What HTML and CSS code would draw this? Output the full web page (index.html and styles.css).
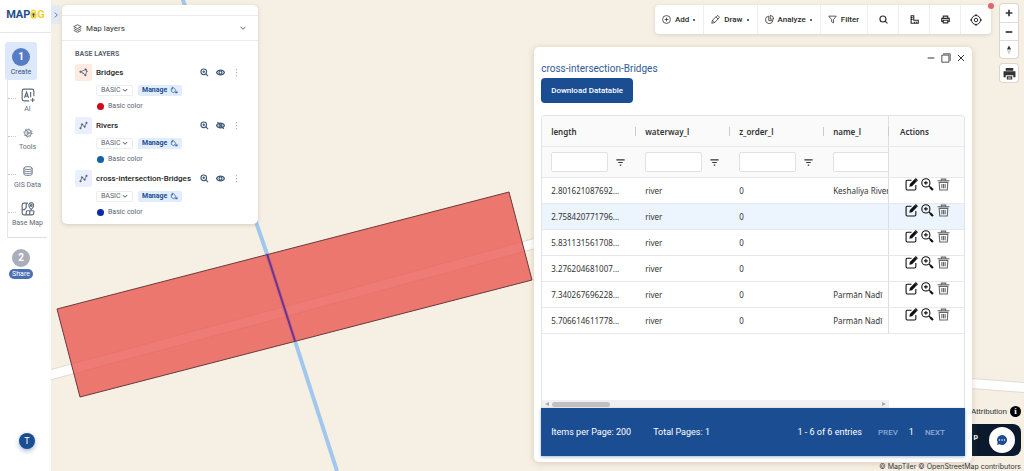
FILE: index.html
```
<!DOCTYPE html>
<html lang="en">
<head>
    <meta charset="UTF-8">
    <meta name="viewport" content="width=device-width, initial-scale=1.0">
    <title>MAPOG</title>
    <link rel="stylesheet" href="styles.css">
</head>
<body>
    <!-- icon sprite -->
    <svg class="sprite" aria-hidden="true">
        <symbol id="i-zoom" viewBox="0 0 24 24"><circle cx="10" cy="10" r="7.5"/><path d="M10 6.5v7M6.5 10h7M15.5 15.5l6 6"/></symbol>
        <symbol id="i-zoom-heavy" viewBox="0 0 24 24"><circle cx="9" cy="9" r="7.5"/><path d="M9 5.5v7M5.5 9h7M14.5 14.5l2 2"/><path d="M16.5 16.5l5.5 5.5" stroke-width="4"/></symbol>
        <symbol id="i-eye" viewBox="0 0 24 24"><path d="M1.5 12C5 3.500 19 3.500 22.500 12C19 20.500 5 20.500 1.500 12z"/><circle cx="12" cy="12" r="4"/></symbol>
        <symbol id="i-eye-off" viewBox="0 0 24 24"><path d="M1.500 12C5 3.500 19 3.500 22.500 12C19 20.500 5 20.500 1.500 12z"/><circle cx="12" cy="12" r="4"/><path d="M4 3l17 18"/></symbol>
        <symbol id="i-dots" viewBox="0 0 24 24"><path d="M12 3v3M12 11v3M12 19v3"/></symbol>
        <symbol id="i-down" viewBox="0 0 24 24"><path d="M2 7l10 10L22 7"/></symbol>
        <symbol id="i-line" viewBox="0 0 24 24"><path d="M4 19l4-10 7 6 5-10"/><g fill="currentColor"><circle cx="4" cy="19" r="2"/><circle cx="8" cy="9" r="2"/><circle cx="15" cy="15" r="2"/><circle cx="20" cy="5" r="2"/></g></symbol>
        <symbol id="i-polygon" viewBox="0 0 24 24"><path d="M4 10L18 4l3 5-4 10-6-5z"/><g fill="currentColor"><circle cx="4" cy="10" r="2"/><circle cx="18" cy="4" r="2"/><circle cx="21" cy="9" r="1"/><circle cx="17" cy="19" r="2"/><circle cx="11" cy="14" r="1"/></g></symbol>
        <symbol id="i-paint" viewBox="0 0 24 24"><path d="M4 8l7-3 7 9-8 6-6-4zM7 2v8M14 20h8v-4M19 16v6"/></symbol>
        <symbol id="i-layers" viewBox="0 0 24 24"><path d="M12 2l10 5-10 5L2 7zM2 12l10 5 10-5M2 17l10 5 10-5"/></symbol>
        <symbol id="i-plus-circle" viewBox="0 0 24 24"><circle cx="12" cy="12" r="10.500"/><path d="M12 7v10M7 12h10"/></symbol>
        <symbol id="i-pencil" viewBox="0 0 24 24"><path d="M2 22l2-8L16 2c3-1 6 2 6 5L10 20zM13 5l6 6M4 14l6 6"/></symbol>
        <symbol id="i-pie" viewBox="0 0 24 24"><path d="M10 3a10 10 0 1 0 11 12H10z"/><path d="M14 1v10h9A10 10 0 0 0 14 1z"/></symbol>
        <symbol id="i-funnel" viewBox="0 0 24 24"><path d="M2 3h20l-7.500 9v9l-5-3v-6z"/></symbol>
        <symbol id="i-search" viewBox="0 0 24 24"><circle cx="10.500" cy="10.500" r="8"/><path d="M16.500 16.500l6 6"/></symbol>
        <symbol id="i-ruler" viewBox="0 0 24 24"><path d="M3 2h7v12h12v8H3zM3 7h4M3 12h4M12 22v-4M17 22v-4"/></symbol>
        <symbol id="i-print" viewBox="0 0 24 24"><path d="M6 9V3h12v6M6 17H2V9h20v8h-4M6 14h12v7H6z"/></symbol>
        <symbol id="i-target" viewBox="0 0 24 24"><circle cx="12" cy="12" r="9"/><circle cx="12" cy="12" r="3.500"/><path d="M12 0v4M12 20v4M0 12h4M20 12h4"/></symbol>
        <symbol id="i-plus" viewBox="0 0 24 24"><path d="M12 2v20M2 12h20"/></symbol>
        <symbol id="i-minus" viewBox="0 0 24 24"><path d="M2 12h20"/></symbol>
        <symbol id="i-compass" viewBox="0 0 24 24"><path d="M12 1l5 10H7z" fill="#333" stroke="none"/><path d="M12 23l5-10H7z" fill="#ccc" stroke="none"/></symbol>
        <symbol id="i-print-solid" viewBox="0 0 24 24"><path d="M5 2h14v5H5zM1 8h22v11h-4v-4H5v4H1zM7 17h10v6H7z" fill="currentColor" stroke="none"/><path d="M9 19h6M9 21.500h6" stroke="#fff" stroke-width="1"/></symbol>
        <symbol id="i-restore" viewBox="0 0 24 24"><path d="M2 5h17v17H2zM5 2h17v17" /></symbol>
        <symbol id="i-close" viewBox="0 0 24 24"><path d="M3 3l18 18M21 3L3 21"/></symbol>
        <symbol id="i-filter" viewBox="0 0 24 24"><path d="M1 5h22M6 12h12M10 19h4"/></symbol>
        <symbol id="i-edit" viewBox="0 0 24 24"><path d="M12 4H4q-2 0-2 2v14q0 2 2 2h14q2 0 2-2v-7"/><path d="M8 16l1-5L18 2l4 4-9 9z" fill="currentColor" stroke="none"/><path d="M19 1l4 4" stroke-width="2.500"/></symbol>
        <symbol id="i-trash" viewBox="0 0 24 24"><path d="M1 5h22M8 5V2h8v3M3 8h18M4 8l1 14h14l1-14" /><path d="M9 11v8M12 11v8M15 11v8"/></symbol>
        <symbol id="i-ai" viewBox="0 0 24 24"><path d="M14 22H5q-3 0-3-3V5q0-3 3-3h14q3 0 3 3v9M6 17l3.500-10L13 17M7.500 14h4M16.500 7v9M20 17v7M16.500 20.500h7"/></symbol>
        <symbol id="i-gear" viewBox="0 0 24 24"><circle cx="12" cy="12" r="8"/><circle cx="12" cy="12" r="10" stroke-dasharray="3 4.850"/><circle cx="12" cy="12" r="2.500"/><path d="M14.500 12h5M11 10L8 5M11 14l-3 5"/></symbol>
        <symbol id="i-data" viewBox="0 0 24 24"><ellipse cx="12" cy="5" rx="10" ry="3.500"/><path d="M2 5v14c0 5 20 5 20 0V5M2 10c0 4.500 20 4.500 20 0M2 15c0 4.500 20 4.500 20 0"/></symbol>
        <symbol id="i-basemap" viewBox="0 0 24 24"><path d="M12 2H5Q2 2 2 5v14q0 3 3 3h14q3 0 3-3v-4M9 2v7l-3 4H2M9 22v-5q0-2 2-2h11M15 15v7"/><path d="M17.500 13c-7-6-4-12 0-12s7 6 0 12z"/><circle cx="17.500" cy="6" r="1.500"/></symbol>
    </svg>

    <nav class="sidebar">
        <div class="logo">MAP<svg viewBox="0 0 16 24"><path d="M4 9V7a4 4 0 0 1 8 0v2" fill="none" stroke="#f2cf35" stroke-width="3"/><rect x="1" y="8" width="14" height="14" rx="4" fill="#f2cf35"/><circle cx="8" cy="13" r="2.500" fill="#36507a"/><path d="M7 14h2v5H7z" fill="#36507a"/></svg><span>G</span></div>
        <button class="step active"><span class="num">1</span>Create</button>
        <ul class="tree">
            <li><button><svg class="ic"><use href="#i-ai"/></svg>AI</button></li>
            <li><button><svg class="ic small"><use href="#i-gear"/></svg>Tools</button></li>
            <li><button><svg class="ic small"><use href="#i-data"/></svg>GIS Data</button></li>
            <li><button><svg class="ic"><use href="#i-basemap"/></svg>Base Map</button></li>
        </ul>
        <button class="step share"><span class="num">2</span><span class="pill">Share</span></button>
        <button class="avatar">T</button>
    </nav>

    <main class="map">
        <svg class="canvas" viewBox="0 0 973 471" preserveAspectRatio="xMidYMid slice">
            <g class="road-edge"><path d="M-5 376L244 309 500 239"/><path d="M900 382L980 388"/></g>
            <g class="road"><path d="M-5 376L244 309 500 239"/><path d="M900 382L980 388"/></g>
            <path class="river" d="M131 -3L205 222 216 254 244 341 286 471"/>
            <path class="bridge" d="M6 309L458 192 481 280 29 397z"/>
            <path class="crossing" d="M216 254L244 341"/>
        </svg>

        <button class="collapse" aria-label="Collapse"><svg class="ic"><use href="#i-down"/></svg></button>

        <section class="layers">
            <header class="layers-head">
                <svg class="ic"><use href="#i-layers"/></svg>
                <span>Map layers</span>
                <svg class="ic chev"><use href="#i-down"/></svg>
            </header>
            <h2>BASE LAYERS</h2>
            <div class="layer">
                <div class="layer-head">
                    <span class="type poly"><svg class="ic"><use href="#i-polygon"/></svg></span>
                    <b>Bridges</b>
                    <button aria-label="Zoom to layer"><svg class="ic"><use href="#i-zoom"/></svg></button>
                    <button aria-label="Hide layer"><svg class="ic"><use href="#i-eye"/></svg></button>
                    <button aria-label="More"><svg class="ic"><use href="#i-dots"/></svg></button>
                </div>
                <div class="layer-style">
                    <select aria-label="Style"><option>BASIC</option></select>
                    <button class="manage">Manage <svg class="ic"><use href="#i-paint"/></svg></button>
                </div>
                <div class="layer-color"><i class="red"></i>Basic color</div>
            </div>
            <div class="layer">
                <div class="layer-head">
                    <span class="type"><svg class="ic"><use href="#i-line"/></svg></span>
                    <b>Rivers</b>
                    <button aria-label="Zoom to layer"><svg class="ic"><use href="#i-zoom"/></svg></button>
                    <button aria-label="Show layer"><svg class="ic"><use href="#i-eye-off"/></svg></button>
                    <button aria-label="More"><svg class="ic"><use href="#i-dots"/></svg></button>
                </div>
                <div class="layer-style">
                    <select aria-label="Style"><option>BASIC</option></select>
                    <button class="manage">Manage <svg class="ic"><use href="#i-paint"/></svg></button>
                </div>
                <div class="layer-color"><i class="blue"></i>Basic color</div>
            </div>
            <div class="layer">
                <div class="layer-head">
                    <span class="type"><svg class="ic"><use href="#i-line"/></svg></span>
                    <b>cross-intersection-Bridges</b>
                    <button aria-label="Zoom to layer"><svg class="ic"><use href="#i-zoom"/></svg></button>
                    <button aria-label="Hide layer"><svg class="ic"><use href="#i-eye"/></svg></button>
                    <button aria-label="More"><svg class="ic"><use href="#i-dots"/></svg></button>
                </div>
                <div class="layer-style">
                    <select aria-label="Style"><option>BASIC</option></select>
                    <button class="manage">Manage <svg class="ic"><use href="#i-paint"/></svg></button>
                </div>
                <div class="layer-color"><i class="navy"></i>Basic color</div>
            </div>
        </section>

        <div class="toolbar">
            <button><svg class="ic"><use href="#i-plus-circle"/></svg>Add<i class="caret"></i></button>
            <button><svg class="ic"><use href="#i-pencil"/></svg>Draw<i class="caret"></i></button>
            <button><svg class="ic"><use href="#i-pie"/></svg>Analyze<i class="caret"></i></button>
            <button><svg class="ic"><use href="#i-funnel"/></svg>Filter</button>
            <button class="tool" aria-label="Search"><svg class="ic"><use href="#i-search"/></svg></button>
            <button class="tool" aria-label="Measure"><svg class="ic"><use href="#i-ruler"/></svg></button>
            <button class="tool" aria-label="Print"><svg class="ic"><use href="#i-print"/></svg></button>
            <button class="tool big" aria-label="Locate"><svg class="ic"><use href="#i-target"/></svg></button>
            <span class="badge"></span>
        </div>

        <div class="controls">
            <div class="ctrl-group">
                <button aria-label="Zoom in"><svg class="ic"><use href="#i-plus"/></svg></button>
                <button aria-label="Zoom out"><svg class="ic"><use href="#i-minus"/></svg></button>
                <button class="compass" aria-label="Reset north"><svg class="ic"><use href="#i-compass"/></svg></button>
            </div>
            <div class="ctrl-group">
                <button class="printer" aria-label="Print map"><svg class="ic"><use href="#i-print-solid"/></svg></button>
            </div>
        </div>

        <div class="attribution">Attribution <b>i</b></div>
        <button class="chat"><span>p</span>
            <span class="bubble"><svg viewBox="0 0 24 24"><path d="M12 2a10 10 0 1 1-5 18.600L2 22l1.400-5A10 10 0 0 1 12 2z" fill="#1a4d92"/><g fill="#fff"><circle cx="7" cy="12" r="1.500"/><circle cx="12" cy="12" r="1.500"/><circle cx="17" cy="12" r="1.500"/></g></svg></span>
        </button>
        <div class="copyright"><a href="#">© MapTiler</a> <a href="#">© OpenStreetMap contributors</a></div>

        <section class="window">
            <div class="win-buttons">
                <button aria-label="Minimize"><svg class="ic"><use href="#i-minus"/></svg></button>
                <button aria-label="Restore"><svg class="ic restore"><use href="#i-restore"/></svg></button>
                <button aria-label="Close"><svg class="ic"><use href="#i-close"/></svg></button>
            </div>
            <h1>cross-intersection-Bridges</h1>
            <button class="download">Download Datatable</button>
            <div class="grid">
                <table>
                    <thead>
                        <tr><th>length</th><th>waterway_l</th><th>z_order_l</th><th>name_l</th><th class="pin">Actions</th></tr>
                        <tr class="filters">
                            <td><div><input type="text" aria-label="Filter length"><svg class="ic"><use href="#i-filter"/></svg></div></td>
                            <td><div><input type="text" aria-label="Filter waterway_l"><svg class="ic"><use href="#i-filter"/></svg></div></td>
                            <td><div><input type="text" aria-label="Filter z_order_l"><svg class="ic"><use href="#i-filter"/></svg></div></td>
                            <td><div><input type="text" aria-label="Filter name_l"></div></td>
                            <td class="pin"></td>
                        </tr>
                    </thead>
                    <tbody id="rows"></tbody>
                </table>
            </div>
            <div class="scroll"><div class="track"><i class="left"></i><i class="thumb"></i><i class="right"></i></div></div>
            <footer class="pager">
                <span>Items per Page: 200</span>
                <span class="total">Total Pages: 1</span>
                <span class="entries">1 - 6 of 6 entries</span>
                <button disabled>PREV</button>
                <span>1</span>
                <button disabled>NEXT</button>
            </footer>
        </section>
    </main>

    <script>
        var data = [
            ['2.801621087692...', 'river', '0', 'Keshaliya River'],
            ['2.758420771796...', 'river', '0', ''],
            ['5.831131561708...', 'river', '0', ''],
            ['3.276204681007...', 'river', '0', ''],
            ['7.340267696228...', 'river', '0', 'Parmān Nadī'],
            ['5.706614611778...', 'river', '0', 'Parmān Nadī']
        ];
        var actions = '<td class="pin"><div class="actions">' +
            '<button aria-label="Edit"><svg class="ic"><use href="#i-edit"/></svg></button>' +
            '<button aria-label="Zoom"><svg class="ic"><use href="#i-zoom-heavy"/></svg></button>' +
            '<button class="trash" aria-label="Delete"><svg class="ic"><use href="#i-trash"/></svg></button>' +
            '</div></td>';

        var rows = document.getElementById('rows');
        data.forEach(function (row, i) {
            var tr = document.createElement('tr');
            if (i === 1) tr.className = 'hover';
            tr.innerHTML = '<td>' + row.join('</td><td>') + '</td>' + actions;
            rows.appendChild(tr);
        });
    </script>
</body>
</html>
```
FILE: styles.css
```
* {
    box-sizing: border-box;
}

body {
    margin: 0;
    display: flex;
    min-height: 100vh;
    font-family: Roboto, "Liberation Sans", sans-serif;
    font-size: 8px;
    color: #333;
    background: #f6efe3;
}

button {
    font: inherit;
    color: inherit;
    background: none;
    border: none;
    padding: 0;
    cursor: pointer;
}

a {
    color: inherit;
    text-decoration: none;
}

.sprite {
    position: absolute;
    width: 0;
    height: 0;
}

.ic {
    display: block;
    flex: none;
    width: 9px;
    height: 9px;
    fill: none;
    stroke: currentColor;
    stroke-width: 2;
    overflow: visible;
}

/* sidebar */
.sidebar {
    flex: none;
    width: 51px;
    display: flex;
    flex-direction: column;
    background: #fff;
    color: #5f6b7c;
}

.logo {
    display: flex;
    align-items: center;
    justify-content: center;
    height: 33px;
    padding-bottom: 4px;
    border-bottom: 1px solid #e3e6ea;
    margin-bottom: 9px;
    font-size: 11px;
    font-weight: 700;
    color: #1d4e89;
}

.logo svg {
    width: 7px;
    height: 12px;
}

.logo span {
    color: #f2cf35;
}

.step {
    width: 32px;
    margin-left: 5px;
    height: 38px;
    display: flex;
    flex-direction: column;
    align-items: center;
    gap: 1px;
    padding-top: 6px;
    border-radius: 3px;
    line-height: 10px;
    font-size: 7px;
}

.step.active {
    background: #dde8fb;
    color: #34507e;
}

.num {
    width: 18px;
    height: 18px;
    line-height: 18px;
    border-radius: 50%;
    background: #557cc5;
    color: #fff;
    font-size: 10px;
    font-weight: 700;
}

.tree {
    list-style: none;
    margin: 0 4px 0 7px;
    padding: 0 0 5px;
    border-left: 1px solid #e3e6ea;
    border-bottom: 1px solid #dcdfe4;
}

.tree li {
    position: relative;
    height: 38px;
}

.tree li::before {
    content: "";
    position: absolute;
    left: 0;
    top: 18px;
    width: 8px;
    border-top: 1px dotted #c3c8d0;
}

.tree button {
    width: 100%;
    height: 38px;
    padding-top: 8px;
    display: flex;
    flex-direction: column;
    align-items: center;
    gap: 2px;
    line-height: 10px;
    font-size: 7px;
}

.tree .ic {
    width: 14px;
    height: 14px;
}

.tree .ic.small {
    width: 10px;
    height: 10px;
    margin: 2px;
}

.share {
    margin-top: 5px;
    gap: 2px;
}

.share .num {
    background: #a9aeba;
}

.pill {
    padding: 0 3px;
    border-radius: 5px;
    background: #4a6fb3;
    color: #fff;
}

.avatar {
    width: 16px;
    height: 16px;
    margin: auto auto 22px 19px;
    border-radius: 50%;
    background: #1a4d92;
    color: #fff;
    font-size: 9px;
    box-shadow: 0 2px 5px rgba(26, 77, 146, 0.4);
}

/* map */
.map {
    position: relative;
    flex: 1;
    overflow: hidden;
}

.canvas {
    position: absolute;
    width: 100%;
    height: 100%;
    fill: none;
}

.road {
    stroke: #fff;
    stroke-width: 9;
}

.road-edge {
    stroke: #e2dccf;
    stroke-width: 11;
}

.river {
    stroke: #a0c8ee;
    stroke-width: 4;
}

.bridge {
    fill: #e84f48;
    fill-opacity: 0.75;
    stroke: #6b3a3a;
    stroke-width: 1;
}

.crossing {
    stroke: #6a3592;
    stroke-width: 2;
}

.collapse {
    position: absolute;
    left: 0;
    top: 5px;
    width: 9px;
    height: 19px;
    background: #e3e9f3;
    color: #5b7fb0;
}

.collapse .ic {
    width: 6px;
    height: 6px;
    margin: auto;
    stroke-width: 4;
    transform: rotate(-90deg);
}

/* layers panel */
.layers {
    position: absolute;
    left: 11px;
    top: 5px;
    width: 196px;
    padding: 10px 0 2px;
    border-radius: 5px;
    background: #fff;
    box-shadow: 0 1px 4px rgba(0, 0, 0, 0.15);
}

.layers-head {
    display: flex;
    align-items: center;
    gap: 4px;
    height: 26px;
    padding: 0 12px 0 11px;
    border: solid #e8eaed;
    border-width: 1px 0;
}

.layers-head .chev {
    width: 6px;
    height: 6px;
    margin-left: auto;
    stroke-width: 3;
}

.layers h2 {
    margin: 7px 13px 3px;
    font-size: 7px;
    line-height: 12px;
    font-weight: 700;
    color: #5a6472;
}

.layer {
    padding: 0 17px 3px 13px;
}

.layer-head {
    display: flex;
    align-items: center;
    gap: 7px;
    height: 18px;
    color: #3f5877;
}

.layer-head b {
    flex: 1;
    margin-left: -3px;
    font-weight: 500;
    color: #222;
}

.layer-head button .ic {
    stroke-width: 3;
}

.layer-head button:last-child {
    color: #999;
}

.type {
    width: 17px;
    height: 17px;
    padding: 4px;
    border-radius: 2px;
    background: #e9effc;
    color: #5b6577;
}

.type.poly {
    background: #fdeae0;
}

.layer-style,
.layer-color {
    display: flex;
    align-items: center;
    margin-left: 21px;
}

.layer-style {
    gap: 5px;
    height: 12px;
    margin-top: 3px;
    margin-bottom: 3px;
}

.layer-style select {
    appearance: none;
    width: 37px;
    height: 11px;
    padding: 0 4px;
    border: 1px solid #eceef1;
    border-radius: 2px;
    font: 7px Roboto, sans-serif;
    color: #5a6472;
    background: url("data:image/svg+xml,%3Csvg xmlns='http://www.w3.org/2000/svg' viewBox='0 0 24 24' fill='none' stroke='%23555' stroke-width='4'%3E%3Cpath d='M3 8l9 9 9-9'/%3E%3C/svg%3E") no-repeat right 4px center / 6px 6px #fff;
}

.manage {
    display: flex;
    align-items: center;
    gap: 3px;
    height: 11px;
    padding: 0 4px;
    border-radius: 2px;
    background: #e2edfb;
    color: #1a4d92;
    font-size: 7px;
    font-weight: 700;
}

.manage .ic {
    width: 8px;
    height: 8px;
}

.layer-color {
    gap: 4px;
    height: 14px;
    padding-left: 1px;
    font-size: 7px;
    color: #5a6472;
}

.layer-color i {
    width: 7px;
    height: 7px;
    border-radius: 50%;
}

.red { background: #cc0a1a; }
.blue { background: #1260a8; }
.navy { background: #0d2ba8; }

/* toolbar */
.toolbar {
    position: absolute;
    right: 33px;
    top: 5px;
    display: flex;
    height: 29px;
    border-radius: 4px;
    background: #fff;
    box-shadow: 0 1px 4px rgba(0, 0, 0, 0.12);
}

.toolbar button {
    display: flex;
    align-items: center;
    gap: 4px;
    padding: 0 8px 0 7px;
    border-left: 1px solid #eee;
    font-weight: 500;
    color: #2a2a2a;
}

.toolbar button:first-child {
    border-left: none;
}

.toolbar .tool {
    width: 31px;
    padding: 0;
    justify-content: center;
}

.toolbar .tool .ic {
    stroke-width: 3;
}

.toolbar .big .ic {
    width: 12px;
    height: 12px;
    stroke-width: 2;
}

.caret {
    width: 2px;
    height: 2px;
    border-radius: 1px;
    background: #333;
}

.badge {
    position: absolute;
    right: -3px;
    top: -2px;
    width: 6px;
    height: 6px;
    border-radius: 50%;
    background: #e06666;
}

/* map controls */
.controls {
    position: absolute;
    right: 6px;
    top: 4px;
    display: flex;
    flex-direction: column;
    gap: 6px;
}

.ctrl-group {
    width: 18px;
    border-radius: 3px;
    background: #fff;
    box-shadow: 0 0 0 1px rgba(0, 0, 0, 0.1);
}

.ctrl-group button {
    display: flex;
    align-items: center;
    justify-content: center;
    width: 18px;
    height: 18px;
}

.ctrl-group button + button {
    border-top: 1px solid #ddd;
}

.ctrl-group .ic {
    width: 8px;
    height: 8px;
    stroke-width: 5;
}

.ctrl-group .compass .ic {
    width: 10px;
    height: 10px;
}

.ctrl-group .printer .ic {
    width: 13px;
    height: 13px;
}

.attribution {
    position: absolute;
    right: 3px;
    bottom: 54px;
    display: flex;
    align-items: center;
    gap: 3px;
    font-family: "Liberation Sans", Arial, sans-serif;
    font-size: 8px;
}

.attribution b {
    width: 11px;
    height: 11px;
    border-radius: 50%;
    background: #000;
    color: #fff;
    font: bold 9px/11px "Liberation Serif", serif;
    text-align: center;
}

.chat {
    position: absolute;
    right: 3px;
    bottom: 15px;
    display: flex;
    align-items: center;
    justify-content: flex-end;
    gap: 11px;
    width: 90px;
    height: 32px;
    padding-right: 6px;
    border-radius: 8px;
    background: #0a1a2c;
    color: #fff;
    font-weight: 700;
}

.chat > span:first-child {
    padding-bottom: 8px;
}

.bubble {
    display: flex;
    align-items: center;
    justify-content: center;
    width: 26px;
    height: 26px;
    border-radius: 50%;
    background: #fff;
}

.bubble svg {
    width: 12px;
    height: 12px;
}

.copyright {
    position: absolute;
    right: 3px;
    bottom: 0;
    font: 7px/9px Inter, Arial, sans-serif;
}

/* data window */
.window {
    position: absolute;
    right: 52px;
    top: 47px;
    bottom: 9px;
    width: 45%;
    display: flex;
    flex-direction: column;
    align-items: flex-start;
    padding: 6px 7px;
    border-radius: 5px;
    background: #fff;
    box-shadow: 0 1px 6px rgba(120, 100, 60, 0.25);
}

.win-buttons {
    display: flex;
    align-items: center;
    align-self: flex-end;
    gap: 6px;
    height: 10px;
}

.win-buttons .ic {
    width: 8px;
    height: 8px;
    stroke-width: 3;
}

.win-buttons .restore {
    width: 10px;
    height: 10px;
    stroke-width: 2;
}

.window h1 {
    margin: 0;
    font-size: 10px;
    line-height: 12px;
    font-weight: 400;
    color: #2f5a97;
}

.download {
    height: 25px;
    margin: 3px 0 12px;
    padding: 0 10px;
    border-radius: 4px;
    background: #1a4d92;
    color: #fff;
    font-size: 8px;
    font-weight: 500;
}

.grid {
    flex: 1;
    width: 100%;
    overflow: hidden;
    border: 1px solid #e2e4e7;
    border-bottom: none;
    border-radius: 4px 4px 0 0;
    font-family: "Noto Sans", sans-serif;
}

table {
    width: 100%;
    min-width: 452px;
    table-layout: fixed;
    border-collapse: separate;
    border-spacing: 0;
}

th,
td {
    height: 26px;
    padding: 0 0 0 9px;
    border-bottom: 1px solid #e6e8ea;
    background: #fff;
    text-align: left;
    white-space: nowrap;
}

th {
    position: relative;
    height: 31px;
    font-weight: 600;
    background: #fafafa;
}

th:not(:first-child)::before {
    content: "";
    position: absolute;
    left: -1px;
    top: 11px;
    height: 9px;
    border-left: 1px solid #ccc;
}

.filters td {
    height: 31px;
    background: #fafafa;
}

.filters div {
    display: flex;
    align-items: center;
    gap: 8px;
}

.filters input {
    width: 57px;
    height: 20px;
    border: 1px solid #dfe1e4;
    border-radius: 2px;
    background: #fff;
    font: inherit;
}

.filters .ic {
    stroke-width: 3;
}

.hover td {
    background: #ecf5fd;
}

.pin {
    position: sticky;
    right: 0;
    width: 76px;
    padding-left: 11px;
    border-left: 1px solid #dcdee1;
}

td.pin {
    vertical-align: top;
    padding-left: 16px;
}

.actions {
    display: flex;
    gap: 3px;
    color: #111;
}

.actions .ic {
    width: 13px;
    height: 13px;
}

.actions .trash {
    color: #666;
}

.scroll {
    width: 100%;
    height: 8px;
    padding-right: 75px;
    border: solid #e2e4e7;
    border-width: 0 1px;
}

.track {
    display: flex;
    align-items: center;
    height: 8px;
    padding: 0 3px;
    gap: 3px;
    background: #f0f0f0;
}

.left,
.right {
    border: 2px solid transparent;
}

.left {
    border-right: 4px solid #aaa;
    border-left: none;
}

.right {
    margin-left: auto;
    border-left: 4px solid #aaa;
    border-right: none;
}

.thumb {
    width: 58px;
    height: 5px;
    border-radius: 3px;
    background: #c1c1c1;
}

.pager {
    display: flex;
    align-items: center;
    width: 100%;
    height: 48px;
    padding: 0 20px 0 10px;
    background: #1a4d92;
    color: #fff;
    font-size: 9px;
    box-shadow: 0 1px 3px rgba(26, 77, 146, 0.4);
}

.total {
    margin-left: 22px;
}

.entries {
    margin-left: auto;
    margin-right: 16px;
}

.pager button {
    color: #8ea9cf;
    font-size: 8px;
    font-weight: 500;
}

.pager button + span {
    margin: 0 11px;
}
```
